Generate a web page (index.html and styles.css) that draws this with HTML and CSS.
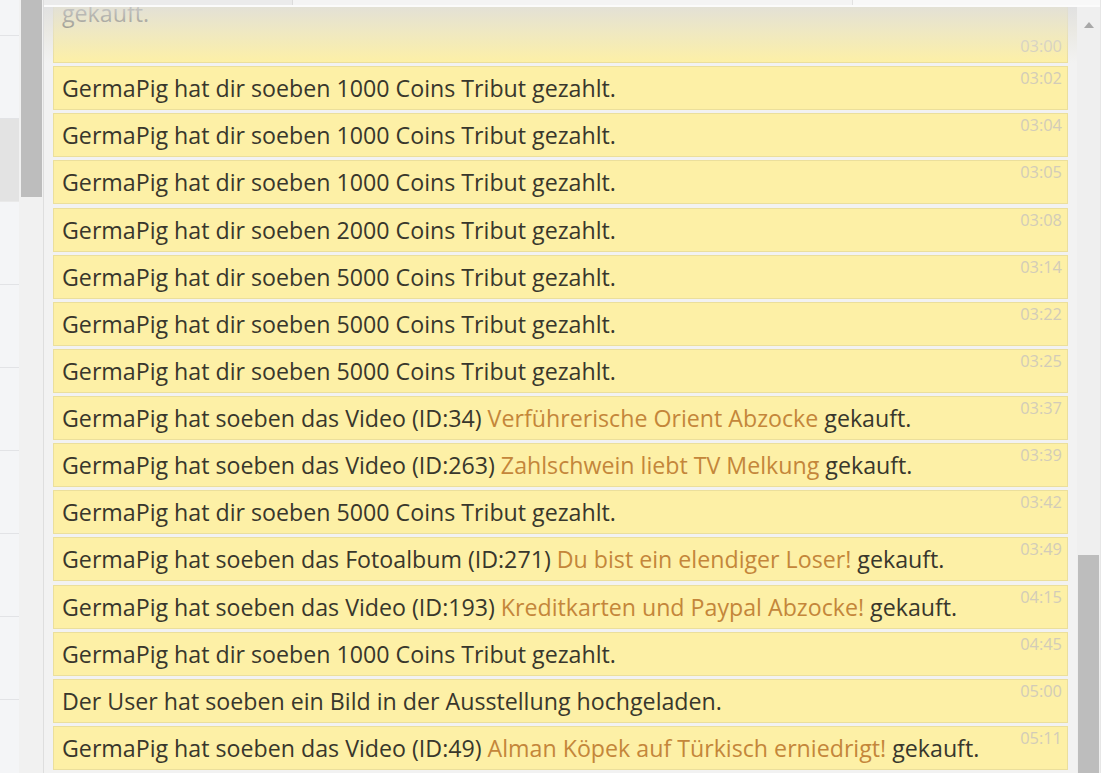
FILE: index.html
```html
<!DOCTYPE html>
<html lang="de">
<head>
<meta charset="utf-8">
<title>Log</title>
<link rel="stylesheet" href="styles.css">
</head>
<body>
<div class="page">
  <aside class="side">
    <div class="side-item"></div>
    <div class="side-item"></div>
    <div class="side-item active"></div>
    <div class="side-item"></div>
    <div class="side-item"></div>
    <div class="side-item"></div>
    <div class="side-item"></div>
    <div class="side-item"></div>
    <div class="side-item"></div>
    <div class="side-item"></div>
  </aside>
  <div class="side-scroll"><div class="side-thumb"></div></div>
  <main class="main">
    <div class="tabs">
      <div class="tab t1"></div>
      <div class="tab t2"></div>
      <div class="tab t3"></div>
    </div>
    <div class="body">
      <div class="viewport">
        <div class="fade"></div>
        <div class="log">
          <div class="row first"><span class="msg">GermaPig hat soeben das Fotoalbum (ID:270) <a class="link">Demütigung für Zahlschweine</a><br>gekauft.</span><span class="time">03:00</span></div>
          <div class="row"><span class="msg">GermaPig hat dir soeben 1000 Coins Tribut gezahlt.</span><span class="time">03:02</span></div>
          <div class="row"><span class="msg">GermaPig hat dir soeben 1000 Coins Tribut gezahlt.</span><span class="time">03:04</span></div>
          <div class="row"><span class="msg">GermaPig hat dir soeben 1000 Coins Tribut gezahlt.</span><span class="time">03:05</span></div>
          <div class="row"><span class="msg">GermaPig hat dir soeben 2000 Coins Tribut gezahlt.</span><span class="time">03:08</span></div>
          <div class="row"><span class="msg">GermaPig hat dir soeben 5000 Coins Tribut gezahlt.</span><span class="time">03:14</span></div>
          <div class="row"><span class="msg">GermaPig hat dir soeben 5000 Coins Tribut gezahlt.</span><span class="time">03:22</span></div>
          <div class="row"><span class="msg">GermaPig hat dir soeben 5000 Coins Tribut gezahlt.</span><span class="time">03:25</span></div>
          <div class="row"><span class="msg">GermaPig hat soeben das Video (ID:34) <a class="link">Verführerische Orient Abzocke</a> gekauft.</span><span class="time">03:37</span></div>
          <div class="row"><span class="msg">GermaPig hat soeben das Video (ID:263) <a class="link">Zahlschwein liebt TV Melkung</a> gekauft.</span><span class="time">03:39</span></div>
          <div class="row"><span class="msg">GermaPig hat dir soeben 5000 Coins Tribut gezahlt.</span><span class="time">03:42</span></div>
          <div class="row"><span class="msg">GermaPig hat soeben das Fotoalbum (ID:271) <a class="link">Du bist ein elendiger Loser!</a> gekauft.</span><span class="time">03:49</span></div>
          <div class="row"><span class="msg">GermaPig hat soeben das Video (ID:193) <a class="link">Kreditkarten und Paypal Abzocke!</a> gekauft.</span><span class="time">04:15</span></div>
          <div class="row"><span class="msg">GermaPig hat dir soeben 1000 Coins Tribut gezahlt.</span><span class="time">04:45</span></div>
          <div class="row"><span class="msg">Der User hat soeben ein Bild in der Ausstellung hochgeladen.</span><span class="time">05:00</span></div>
          <div class="row"><span class="msg">GermaPig hat soeben das Video (ID:49) <a class="link">Alman Köpek auf Türkisch erniedrigt!</a> gekauft.</span><span class="time">05:11</span></div>
          <div class="row"><span class="msg">GermaPig hat dir soeben 1000 Coins Tribut gezahlt.</span><span class="time">05:14</span></div>
        </div>
      </div>
      <div class="vscroll">
        <div class="arrow"></div>
        <div class="vthumb"></div>
      </div>
    </div>
  </main>
  <div class="edge"></div>
</div>
</body>
</html>
```

FILE: styles.css
```css
html, body {
  margin: 0;
  padding: 0;
  height: 100%;
  overflow: hidden;
  background: #ffffff;
  font-family: "Open Sans", "Liberation Sans", sans-serif;
}

.page {
  display: flex;
  height: 773px;
}

.side {
  width: 19px;
  flex: none;
  background: #f4f5f7;
  display: flex;
  flex-direction: column;
}

.side-item {
  height: 82px;
  flex: none;
  border-bottom: 1px solid #e2e3e6;
}

.side-item:first-child {
  height: 35px;
}

.side-item.active {
  background: #e3e3e3;
  border-bottom-color: #e9e9e9;
}

.side-scroll {
  width: 24px;
  flex: none;
  background: #f1f1f1;
  display: flex;
  justify-content: center;
  border-right: 1px solid #dedede;
}

.side-thumb {
  width: 21px;
  height: 197px;
  background: #bdbdbd;
}

.main {
  flex: 1;
  display: flex;
  flex-direction: column;
  background: #f2f2f2;
  min-width: 0;
}

.tabs {
  height: 5px;
  flex: none;
  display: flex;
  border-bottom: 2px solid #fbfbfb;
}

.tab {
  height: 100%;
}

.t1 {
  width: 248px;
  background: #ebebeb;
  border-right: 1px solid #dcdcdc;
}

.t2 {
  width: 559px;
  background: #f4f4f4;
  border-right: 1px solid #e2e2e2;
}

.t3 {
  flex: 1;
  background: #f8f8f8;
}

.body {
  flex: 1;
  display: flex;
  min-height: 0;
}

.viewport {
  flex: 1;
  overflow: hidden;
  position: relative;
  padding-left: 9px;
  padding-right: 9px;
}

.fade {
  position: absolute;
  left: 0;
  right: 0;
  top: 0;
  height: 56px;
  z-index: 2;
  background: linear-gradient(to bottom, rgba(222, 222, 222, 0.85) 0%, rgba(228, 226, 216, 0.6) 40%, rgba(255, 255, 255, 0) 100%);
  pointer-events: none;
}

.log {
  display: flex;
  flex-direction: column;
  gap: 3.14px;
  margin-top: -46px;
}

.row {
  position: relative;
  min-height: 44px;
  box-sizing: border-box;
  background: #fdf0a6;
  border: 1px solid #ebdf9c;
  padding: 6px 80px 6px 8px;
  font-size: 23.2px;
  line-height: 30px;
  color: #38372c;
  display: flex;
  align-items: center;
}

.row.first {
  height: 102px;
  align-items: flex-start;
}

.msg {
  display: block;
  white-space: nowrap;
}

.link {
  color: #c4863a;
  text-decoration: none;
}

.time {
  position: absolute;
  top: 2px;
  right: 5px;
  font-size: 16.4px;
  line-height: 18px;
  color: #d2ccb9;
}

.row.first .time {
  top: auto;
  bottom: 7px;
}

.vscroll {
  width: 23px;
  flex: none;
  background: #efefef;
  display: flex;
  flex-direction: column;
  align-items: center;
}

.arrow {
  margin-top: 15px;
  width: 0;
  height: 0;
  border-left: 5px solid transparent;
  border-right: 5px solid transparent;
  border-bottom: 6px solid #a8a8a8;
}

.vthumb {
  margin-top: 527px;
  width: 21px;
  flex: 1;
  background: #bdbdbd;
}

.edge {
  width: 11px;
  flex: none;
  background: #ffffff;
  border-left: 1px solid #e6e6e6;
}
```
